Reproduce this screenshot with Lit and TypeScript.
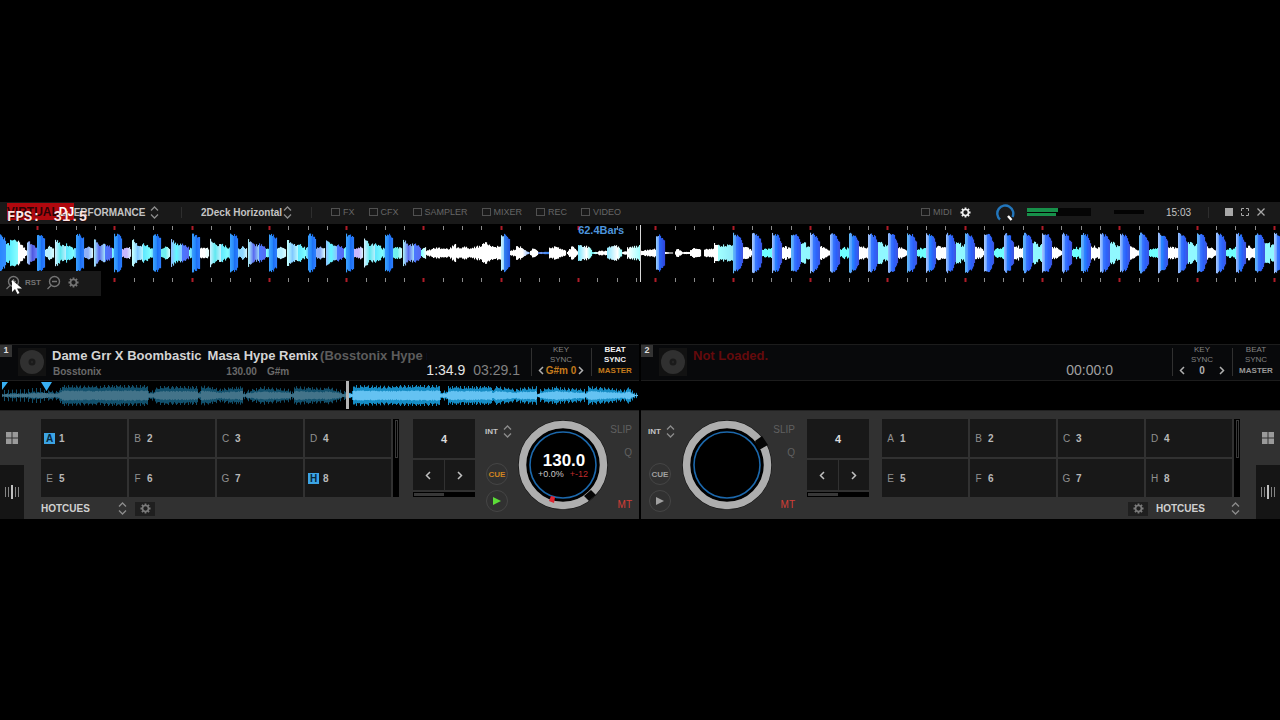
import { LitElement, html, svg, css, nothing } from "lit";
import { customElement, property } from "lit/decorators.js";

type Segment = [number, number, number, number, string, string];

const CENTER = 29;
const TICK_START = 37.9 - 77.32;
const BEAT = 19.33;

const mix = (a: string, b: string, t: number) => {
  const part = (c: string, i: number) => parseInt(c.slice(1 + i * 2, 3 + i * 2), 16);
  return "#" + [0, 1, 2]
    .map((i) => Math.round(part(a, i) + (part(b, i) - part(a, i)) * t).toString(16).padStart(2, "0"))
    .join("");
};

const noise = (n: number) => {
  const v = Math.sin(n * 127.1 + 11.7) * 43758.5453;
  return v - Math.floor(v);
};

const GAP_FILLS = ["#b8f0ff", "#8fb0f8", "#c8b8ff", "#70f0f0", "#ffffff", "#90d8ff"];
const SNARES: [string, string][] = [
  ["#c8f0ff", "#60e8f0"], ["#a8e8f8", "#5a6cf0"], ["#c0ffff", "#80c8ff"], ["#90c0ff", "#60f8ff"],
];

function buildSegments(): Segment[] {
  const out: Segment[] = [];
  out.push([0, 6, 18, 12, "#2a88ff", "#3a90ff"], [6, 10, 9, 8, "#60e8ff", "#60e8ff"],
    [10, 18, 12, 12, "#60f0ff", "#90ffff"], [18, 27, 12, 1, "#ffffff", "#ffffff"],
    [27, 32, 11, 9, "#a8d0ff", "#5058e0"], [32, 37, 8, 5, "#5058e0", "#7088ff"]);
  for (let k = 0; k < 10; k++) {
    const x = 37 + k * BEAT * 2;
    const g = GAP_FILLS[k % GAP_FILLS.length];
    const s = SNARES[k % SNARES.length];
    out.push([x, x + 4, 18, 18, "#3aa0ff", "#2080f8"], [x + 4, x + 8, 18, 14, "#1c70f4", "#3080ff"],
      [x + 8, x + 12, 4, 6, g, g], [x + 12, x + 17, 6, 4, g, "#e0ffff"],
      [x + 18, x + 23, 13, 9, s[0], s[1]], [x + 23, x + 29, 8, 8, s[1], s[0]],
      [x + 29, x + 36, 9, 5, k % 2 ? "#4a78ff" : "#60e8ff", k % 2 ? "#5a68f0" : "#80ffff"],
      [x + 36, x + 39, 4, 6, "#80ffff", "#60c0ff"]);
  }
  const cut = out.filter((s) => s[0] < 421).map((s) => [s[0], Math.min(s[1], 421), s[2], s[3], s[4], s[5]] as Segment);
  const w = "#ffffff";
  cut.push([421, 426, 3, 8, "#80ffff", w], [426, 432, 2, 4, w, w], [432, 450, 5, 4, w, w], [450, 456, 5, 9, w, w],
    [456, 462, 5, 5, w, w], [462, 468, 7, 5, w, w], [468, 480, 4, 7, w, w], [480, 485, 6, 11, w, w],
    [485, 490, 10, 7, w, w], [490, 501, 6, 6, w, w],
    [501, 504, 18, 18, "#c0f0ff", "#90c8ff"], [504, 510, 18, 12, "#3080f0", "#2050e0"], [510, 516, 2, 4, w, w],
    [516, 522, 6, 6, w, w], [522, 530, 4, 0, w, "#80b0ff"], [530, 534, 2, 6, w, w], [534, 538, 5, 1, w, w],
    [538, 549, 1, 1, "#80a0f8", "#3080f0"], [549, 556, 5, 6, w, w], [556, 566, 6, 2, w, w], [567, 572, 1, 7, w, w],
    [572, 578, 6, 1, w, w], [578, 586, 7, 7, "#80e8ff", w], [586, 592, 7, 3, w, "#70ffff"], [592, 598, 1, 1, "#80ffff", w],
    [598, 607, 2, 2, w, w], [607, 617, 5, 8, "#90e8ff", w], [617, 622, 7, 2, w, "#80ffff"], [622, 627, 1, 2, w, w],
    [627, 640, 5, 7, w, "#a0ffff"], [640, 656, 2, 4, w, w],
    [656, 659, 18, 18, "#90c8ff", "#6090ff"], [659, 665, 18, 11, "#2868f8", "#3040d8"], [665, 673, 1, 0, w, w],
    [675, 678, 2, 5, w, w], [678, 682, 4, 1, w, w], [682, 690, 1, 1, w, w], [690, 695, 3, 5, w, w], [695, 701, 4, 4, w, w],
    [704, 714, 4, 4, w, w], [714, 718, 9, 8, w, w], [718, 733, 7, 8, "#a0ffff", "#90e8f8"]);
  const fills: [number, number, string][] = [[6, 1, w], [3, 6, "#70ffff"], [6, 5, w], [10, 8, "#90f8ff"]];
  for (let k = 0; k < 29; k++) {
    const x = 733 + k * BEAT;
    const f = fills[k % 4];
    const edge = k % 3 ? "#a0c4ff" : "#60b8f8";
    cut.push([x, x + 3, 19, 19, edge, "#5090ff"], [x + 3, x + 7, 18, 17, k % 4 === 2 ? "#2888ff" : "#3878ff", "#2858f8"],
      [x + 7, x + 10, 15, 9, "#3060f4", "#4450d8"], [x + 10, x + 15, f[0], (f[0] + f[1]) / 2 + 1, f[2], f[2]],
      [x + 15, x + 20, f[0] / 2 + 2, f[1], f[2], f[2]]);
  }
  return cut;
}

function drawWave() {
  const bars = [];
  for (const [x0, x1, a0, a1, c0, c1] of buildSegments()) {
    for (let x = Math.round(x0); x < Math.round(x1) && x < 1280; x++) {
      const t = (x - x0) / Math.max(1, x1 - x0);
      const base = a0 + (a1 - a0) * t;
      const a = Math.max(0.5, base + (noise(x) - 0.5) * Math.min(3, base * 0.4));
      bars.push(svg`<rect x=${x} y=${CENTER - a} width="1.1" height=${a * 2} fill=${mix(c0, c1, Math.max(0, Math.min(1, t)))} />`);
    }
  }
  const ticks = [];
  for (let i = 0; i < 70; i++) {
    const x = Math.round(TICK_START + i * BEAT) - 0.5;
    if (x < 0) continue;
    const down = i % 4 === 0;
    ticks.push(svg`<path d="M${x} 2v4M${x} 54v4" stroke=${down ? "#b01c28" : "#8a8a8a"} stroke-width=${down ? 2 : 1} />`);
  }
  return html`<svg class="wave" viewBox="0 0 1280 60" preserveAspectRatio="none" aria-label="Beat waveform">
    ${bars}${ticks}<path d="M640.500 1V58" stroke="#d8d8d8" />
  </svg>`;
}

const OVERVIEW: [number, number, number, number][] = [
  [2, 30, 2, 3], [30, 42, 4, 4], [42, 58, 4, 3], [58, 62, 4, 8], [62, 104, 9, 8], [104, 148, 9, 9], [148, 155, 3, 4], [155, 160, 6, 8],
  [160, 198, 8, 8], [198, 201, 3, 3], [201, 222, 9, 5], [222, 243, 6, 8], [243, 247, 2, 3], [247, 265, 4, 8], [265, 291, 7, 5],
  [291, 294, 2, 3], [294, 325, 8, 6], [325, 341, 8, 4], [341, 353, 3, 3], [353, 397, 9, 8], [397, 440, 9, 9], [440, 448, 3, 4],
  [448, 492, 8, 8], [492, 496, 4, 9], [496, 517, 8, 5], [517, 537, 6, 8], [537, 540, 2, 3], [540, 558, 5, 8], [558, 585, 7, 5],
  [585, 588, 3, 7], [588, 612, 8, 6], [612, 626, 6, 4], [626, 631, 7, 6], [631, 638, 4, 0],
];

function drawOverview() {
  let outer = "", inner = "", outerPast = "", innerPast = "";
  for (const [x0, x1, a0, a1] of OVERVIEW) {
    for (let x = x0; x < x1; x++) {
      const base = a0 + ((a1 - a0) * (x - x0)) / (x1 - x0);
      const a = base + (x % 4 === 0 ? 1.5 : noise(x) * 2 - 1.5) + (x < 42 && x % 4 === 0 ? 2 : 0);
      const b = Math.max(0.5, base * 0.5 + noise(x + 900) - 0.3);
      const line = (v: number) => `M${x + 0.5} ${14.5 - v}V${14.5 + v}`;
      if (x < 348) { outerPast += line(a); innerPast += line(b); } else { outer += line(a); inner += line(b); }
    }
  }
  return html`<svg class="ov" viewBox="0 0 639 29" preserveAspectRatio="none" aria-label="Track overview">
    <path d=${outerPast} stroke="#12506c" /><path d=${innerPast} stroke="#437389" />
    <path d=${outer} stroke="#168cc4" /><path d=${inner} stroke="#64c2f2" />
    <path d="M2 1h6l-6 8zM41 1h11l-5.500 9z" fill="#38b0f4" />
    <path d="M347.500 0V28" stroke="#b4b4b4" stroke-width="3" />
  </svg>`;
}

const updown = html`<svg class="ud" viewBox="0 0 9 13" aria-hidden="true"><path d="M1 4.500 4.500 1 8 4.500M1 8.500 4.500 12 8 8.500" fill="none" stroke="currentColor" stroke-width="1.300" /></svg>`;
const gear = html`<svg class="gear" viewBox="0 0 24 24" aria-hidden="true">
  <path fill="none" stroke="currentColor" stroke-width="3.600" d="M12 5.500a6.500 6.500 0 1 0 0 13a6.500 6.500 0 1 0 0-13z" />
  <path stroke="currentColor" stroke-width="4" d="M12 1v4M12 19v4M1 12h4M19 12h4M4.200 4.200 7 7M17 17l2.800 2.800M4.200 19.800 7 17M17 7l2.800-2.800" /></svg>`;
const chevron = (d: string) => html`<svg class="chev" viewBox="0 0 6 9" aria-hidden="true"><path d=${d} fill="none" stroke="currentColor" stroke-width="1.500" /></svg>`;
const LEFT = "M5 1 1.500 4.500 5 8";
const RIGHT = "M1 1 4.500 4.500 1 8";

const shared = css`
  * { box-sizing: border-box; }
  button, select, input { font: inherit; color: inherit; background: none; border: 0; padding: 0; margin: 0; appearance: none; border-radius: 0; }
  button { cursor: pointer; display: flex; align-items: center; justify-content: center; }
  svg { display: block; flex: none; }
  .ud { width: 9px; height: 13px; color: #8c8c8c; }
  .chev { width: 6px; height: 9px; }
  .gear { width: 11px; height: 11px; }
`;

@customElement("dj-toolbar")
class DjToolbar extends LitElement {
  static styles = [shared, css`
    :host { display: flex; align-items: center; box-sizing: border-box; height: 22px; padding-bottom: 2px; background: #191919; color: #c4c4c4; font-size: 10px; position: relative; }
    .brand { position: absolute; left: 7px; top: 1px; width: 67px; height: 17px; background: #b0080e; display: flex; align-items: center; justify-content: center; font: bold 12px "Liberation Sans", sans-serif; color: #2c0406; }
    .brand b { color: #fff; }
    .fps { position: absolute; left: 7px; top: 9px; display: flex; gap: 13px; font: bold 14px/12px "Liberation Mono", monospace; color: #ffe6e6; text-shadow: 0 1px 1px #200; z-index: 2; }
    .pick { display: flex; align-items: center; gap: 4px; font-weight: bold; }
    .layout { margin: 0 22px 0 67px; }
    .bar { width: 1px; height: 11px; background: #2e2e2e; }
    .view { margin: 0 19px; gap: 0; }
    .opts { display: flex; gap: 14px; margin-left: 19px; flex: 1; }
    label { display: flex; align-items: center; gap: 3px; font-size: 9px; color: #666; }
    input { width: 9px; height: 8px; border: 1px solid #505050; }
    .right { display: flex; align-items: center; }
    .right .gear { color: #f0f0f0; }
    .set { margin: 0 25px 0 8px; }
    .knob { width: 19px; height: 19px; }
    .meter { width: 64px; height: 8px; margin: 0 23px 0 12px; background: #050505; display: flex; flex-direction: column; gap: 1px; }
    .meter i { height: 4px; width: 31px; background: #17904a; }
    .meter i + i { height: 3px; width: 29px; }
    .cpu { width: 30px; height: 4px; background: #030303; margin-right: 22px; }
    .clock { width: 42px; }
    .win { display: flex; align-items: center; gap: 8px; margin: 0 15px 0 16px; color: #a8a8a8; }
  `];
  render() {
    return html`
      <div class="brand">VIRTUAL<b>DJ</b></div>
      <div class="fps"><span>FPS:</span><span>31.5</span></div>
      <div class="pick layout"><select aria-label="Layout"><option>PERFORMANCE</option></select>${updown}</div>
      <div class="bar"></div>
      <div class="pick view"><select aria-label="Deck view"><option>2Deck Horizontal</option></select>${updown}</div>
      <div class="bar"></div>
      <div class="opts">${["FX", "CFX", "SAMPLER", "MIXER", "REC", "VIDEO"].map((t) => html`<label><input type="checkbox" />${t}</label>`)}</div>
      <div class="right">
        <label><input type="checkbox" />MIDI</label>
        <button class="set" aria-label="Settings">${gear}</button>
        <svg class="knob" viewBox="0 0 19 19" role="img" aria-label="Master volume"><path d="M4 16.500A8 8 0 1 1 16.500 14" fill="none" stroke="#2276bc" stroke-width="2.400" /><path d="m12 13 3.500 4" stroke="#fff" stroke-width="2.400" /></svg>
        <div class="meter"><i></i><i></i></div>
        <div class="cpu"></div>
        <div class="clock">15:03</div>
        <div class="bar"></div>
        <div class="win">
          <button aria-label="Minimise"><svg width="8" height="8"><path d="M0 0h8v8H0z" fill="currentColor" /></svg></button>
          <button aria-label="Full screen"><svg width="8" height="8"><path d="M.5 3V.5H3M5 .5h2.500V3M7.500 5v2.500H5M3 7.500H.5V5" fill="none" stroke="currentColor" /></svg></button>
          <button aria-label="Close"><svg width="8" height="8"><path d="m.5.5 7 7M7.500.5l-7 7" stroke="currentColor" stroke-width="1.300" /></svg></button>
        </div>
      </div>`;
  }
}

@customElement("dj-deck")
class DjDeck extends LitElement {
  @property({ type: Number }) deck = 1;
  @property({ type: Boolean, reflect: true }) mirrored = false;

  static styles = [shared, css`
    :host { display: block; min-width: 0; background: #313131; color: #b8b8b8; font-size: 10px; }
    .head { display: flex; height: 37px; background: #08090b; border-top: 1px solid #1c1c1c; border-bottom: 1px solid #1c1c1c; }
    .num { width: 12px; height: 12px; background: #333; color: #ddd; font-weight: bold; font-size: 9px; line-height: 11px; text-align: center; }
    .disc { width: 28px; height: 28px; margin: 3px 6px 0 6px; }
    .info { flex: 1; min-width: 0; display: flex; flex-direction: column; }
    .title { width: 375px; overflow: hidden; white-space: pre; font-weight: bold; font-size: 13px; line-height: 21px; color: #d4d4d4; display: flex; gap: 6px; }
    .title .mixname { color: #5c5c5c; margin-left: -4px; }
    .meta { display: flex; align-items: center; font-weight: bold; color: #6a6a6a; line-height: 12px; padding-left: 1px; }
    .bpm { margin-left: 125px; }
    .key { margin-left: 10px; }
    .empty { color: #640a0c; }
    .time { align-self: flex-end; font-size: 14px; line-height: 16px; padding-bottom: 2px; color: #828282; display: flex; gap: 8px; white-space: nowrap; }
    .time b { font-weight: normal; color: #e4e4e4; }
    .idle { margin-right: 48px; color: #a0a0a0; }
    .sync { width: 60px; position: relative; display: flex; flex-direction: column; align-items: center; color: #828282; font-size: 8px; }
    .sync::before { content: ""; position: absolute; left: 0; top: 3px; bottom: 4px; width: 1px; background: #303030; }
    .keysync { margin-left: 11px; }
    .beat { width: 48px; }
    .sync button { line-height: 10px; flex-direction: column; }
    .row { display: flex; align-items: center; justify-content: space-between; width: 46px; font-size: 10px; line-height: 11px; font-weight: bold; color: #b0b0b0; }
    .row.hot { color: #c47a1c; }
    .row button { color: #b0b0b0; }
    .on { color: #f0f0f0; font-weight: bold; }
    .mast { line-height: 11px; white-space: nowrap; color: #989898; font-weight: bold; }
    .mast.hot { color: #c47a1c; }
    .strip { height: 30px; background: #000; border-bottom: 1px solid #222; }
    .ov { width: 100%; height: 29px; }
    .body { display: flex; height: 108px; }
    .side { width: 24px; display: flex; flex-direction: column; }
    .side button { height: 54px; color: #9a9a9a; }
    .side button + button { background: #151515; }
    .padzone { flex: 1; margin: 8px 14px 0 17px; min-width: 0; }
    .padbox { display: flex; gap: 2px; height: 78px; }
    .pads { flex: 1; display: grid; grid-template-columns: repeat(4, 1fr); grid-template-rows: 1fr 1fr; gap: 2px; }
    .pads button { background: #181818; justify-content: flex-start; gap: 4px; padding-left: 3px; font-weight: bold; }
    .pads span { width: 11px; height: 11px; line-height: 11px; text-align: center; color: #909090; font-weight: normal; }
    .pads .lit { background: #3ca4e4; color: #06263c; font-weight: bold; }
    .scroll { width: 6px; background: #000; padding: 1px 1px 0 2px; }
    .scroll i { display: block; height: 38px; border: 1px solid #3a3a3a; }
    .foot { display: flex; align-items: center; height: 22px; padding-top: 1px; font-weight: bold; font-size: 10px; color: #d0d0d0; gap: 8px; }
    .foot .pick { display: flex; align-items: center; justify-content: space-between; width: 86px; }
    .foot .gearbtn { width: 20px; height: 14px; background: #1f1f1f; color: #7a7a7a; }
    .loop { width: 62px; height: 78px; margin-top: 8px; display: grid; grid-template-columns: 1fr 1fr; grid-template-rows: 39px 30px 5px; gap: 2px 1px; }
    .loop button { background: #181818; color: #c0c0c0; }
    .loop .size { grid-column: 1 / 3; font-weight: bold; font-size: 11px; color: #dcdcdc; }
    .loop .track { grid-column: 1 / 3; background: #000; padding: 1px; }
    .loop .track i { display: block; width: 30px; height: 3px; background: #383838; }
    .transport { width: 28px; margin: 13px 5px 0 10px; display: flex; flex-direction: column; align-items: flex-start; }
    .int { display: flex; align-items: center; gap: 3px; font-weight: bold; font-size: 8px; color: #c4c4c4; height: 14px; margin-bottom: 25px; }
    .int select { width: 15px; flex: none; }
    .round { width: 22px; height: 22px; border: 1px solid #454545; border-radius: 50%; font-size: 8px; font-weight: bold; color: #a0a0a0; margin: 0 0 5px 1px; }
    .round.cue { color: #d08420; }
    .round.play { color: #5cdc38; }
    .jog { width: 90px; height: 90px; margin-top: 9px; flex: none; }
    .jog text { font-family: "Liberation Sans", sans-serif; }
    .flags { width: 24px; margin: 11px 7px 0 0; display: flex; flex-direction: column; align-items: flex-end; color: #606060; }
    .flags button { height: 14px; }
    .flags .q { margin-top: 9px; }
    .flags .mt { margin-top: 38px; color: #d43e36; }
    :host([mirrored]) .side { order: 6; }
    :host([mirrored]) .padzone { order: 5; margin: 8px 16px 0 13px; }
    :host([mirrored]) .transport { order: 1; margin-left: 7px; margin-right: 6px; }
    :host([mirrored]) .jog { order: 2; }
    :host([mirrored]) .flags { order: 3; width: 23px; margin-right: 12px; }
    :host([mirrored]) .loop { order: 4; }
    :host([mirrored]) .foot { flex-direction: row-reverse; }
    :host([mirrored]) .foot .pick { width: 84px; }
  `];

  jog(loaded: boolean) {
    return html`<svg class="jog" viewBox="0 0 90 90" role="img" aria-label="Jog wheel">
      <circle cx="45" cy="45" r="37" fill="#000" />
      <circle cx="45" cy="45" r="44.500" fill="none" stroke="#161616" />
      <circle cx="45" cy="45" r="40.500" fill="none" stroke="#aeaeae" stroke-width="7.500" />
      <circle cx="45" cy="45" r="33" fill="none" stroke="#1c68ac" stroke-width="1.600" />
      ${loaded
        ? svg`<path d="m66 76 7-6 5 5-7 6z" fill="#060606" /><path d="m33 76 4 1-1 6-5-2z" fill="#e02430" />
          <text x="46" y="46" text-anchor="middle" font-size="17" font-weight="bold" fill="#fff">130.0</text>
          <text x="20" y="57" font-size="9" fill="#c8c8c8">+0.0%</text><text x="70" y="57" text-anchor="end" font-size="9" fill="#c02c2c">+-12</text>`
        : svg`<path d="m73 21 7-5 6 9-9 5z" fill="#060606" />`}
    </svg>`;
  }

  render() {
    const loaded = this.deck === 1;
    return html`
      <div class="head">
        <div class="num">${this.deck}</div>
        <svg class="disc" viewBox="0 0 28 28" aria-hidden="true"><path d="M0 0h28v28H0z" fill="#121212" /><circle cx="14" cy="14" r="12" fill="#303030" /><circle cx="14" cy="14" r="3.500" fill="#1a1a1a" /><circle cx="14" cy="14" r="1.200" fill="#262626" /></svg>
        <div class="info">
          ${loaded
            ? html`<div class="title"><span>Dame Grr X Boombastic</span><span>Masa Hype Remix</span><span class="mixname">(Bosstonix Hype remix)</span></div>
              <div class="meta"><span>Bosstonix</span><span class="bpm">130.00</span><span class="key">G#m</span></div>`
            : html`<div class="title empty">Not Loaded.</div>`}
        </div>
        <div class="time">${loaded ? html`<b>1:34.9</b><span>03:29.1</span>` : html`<span class="idle">00:00:0</span>`}</div>
        <div class="sync keysync">
          <button><span>KEY</span><span>SYNC</span></button>
          <div class="row ${loaded ? "hot" : ""}"><button aria-label="Key down">${chevron(LEFT)}</button>${loaded ? "G#m 0" : "0"}<button aria-label="Key up">${chevron(RIGHT)}</button></div>
        </div>
        <div class="sync beat">
          <button class=${loaded ? "on" : ""}><span>BEAT</span><span>SYNC</span></button>
          <div class="mast ${loaded ? "hot" : ""}">MASTER</div>
        </div>
      </div>
      <div class="strip">${loaded ? drawOverview() : nothing}</div>
      <div class="body">
        <div class="side">
          <button aria-label="Pads"><svg width="12" height="12"><path d="M0 0h5.500v5.500H0zM6.500 0H12v5.500H6.500zM0 6.500h5.500V12H0zM6.500 6.500H12V12H6.500z" fill="currentColor" /></svg></button>
          <button aria-label="Waveform"><svg width="14" height="14"><path d="M.5 2v10M3.500 2v10M10.500 2v10M13.500 2v10" stroke="#858585" /><path d="M7 0v14" stroke="#c0c0c0" stroke-width="2" /></svg></button>
        </div>
        <div class="padzone">
          <div class="padbox">
            <div class="pads">${["A", "B", "C", "D", "E", "F", "G", "H"].map((l, i) => html`<button><span class=${loaded && (i === 0 || i === 7) ? "lit" : ""}>${l}</span>${i + 1}</button>`)}</div>
            <div class="scroll"><i></i></div>
          </div>
          <div class="foot">
            <div class="pick"><select aria-label="Pad page"><option>HOTCUES</option></select>${updown}</div>
            <button class="gearbtn" aria-label="Pad settings">${gear}</button>
          </div>
        </div>
        <div class="loop">
          <button class="size">4</button>
          <button aria-label="Halve loop">${chevron(LEFT)}</button><button aria-label="Double loop">${chevron(RIGHT)}</button>
          <div class="track"><i></i></div>
        </div>
        <div class="transport">
          <div class="int"><select aria-label="Sync source"><option>INT</option></select>${updown}</div>
          <button class="round ${loaded ? "cue" : ""}">CUE</button>
          <button class="round ${loaded ? "play" : ""}" aria-label="Play"><svg width="8" height="8"><path d="M0 0 8 4 0 8z" fill="currentColor" /></svg></button>
        </div>
        ${this.jog(loaded)}
        <div class="flags"><button>SLIP</button><button class="q">Q</button><button class="mt">MT</button></div>
      </div>`;
  }
}

@customElement("app-root")
class AppRoot extends LitElement {
  static styles = [shared, css`
    :host { display: flex; flex-direction: column; justify-content: center; min-height: 100vh; padding-top: 1px; box-sizing: border-box; background: #000; font-family: "Liberation Sans", Arial, sans-serif; overflow: hidden; }
    .rhythm { position: relative; height: 120px; }
    .wave { width: 100%; height: 60px; }
    .bars { position: absolute; right: 51.250%; top: 0; font-weight: bold; font-size: 11px; line-height: 13px; color: #4c94dc; }
    .zoom { position: absolute; left: 0; top: 47px; width: 101px; height: 25px; padding: 0 0 2px 5px; background: #191919; color: #747474; display: flex; align-items: center; gap: 5px; font-weight: bold; font-size: 8px; }
    .zoom .gear { margin-left: 2px; }
    .cursor { position: absolute; left: 12px; top: 56px; width: 10px; height: 15px; }
    .decks { display: grid; grid-template-columns: 1fr 1fr; gap: 2px; }
  `];
  render() {
    const lens = (d: string) => html`<svg width="15" height="15" viewBox="0 0 15 15"><circle cx="8.500" cy="6.500" r="5" fill="none" stroke="currentColor" stroke-width="1.400" /><path d=${d} stroke="currentColor" stroke-width="1.300" fill="none" /></svg>`;
    return html`
      <dj-toolbar></dj-toolbar>
      <div class="rhythm">
        ${drawWave()}
        <div class="bars">62.4Bars</div>
        <div class="zoom">
          <button aria-label="Zoom in">${lens("M6 6.500h5M8.500 4v5M5 10.500 1.500 14")}</button>
          <button>RST</button>
          <button aria-label="Zoom out">${lens("M6 6.500h5M5 10.500 1.500 14")}</button>
          <button aria-label="Waveform settings">${gear}</button>
        </div>
        <svg class="cursor" viewBox="0 0 10 15" aria-hidden="true"><path d="M0 0v12l3-3 2.500 5 2-1-2.500-4.500H10z" fill="#fff" /></svg>
      </div>
      <div class="decks"><dj-deck .deck=${1}></dj-deck><dj-deck .deck=${2} mirrored></dj-deck></div>`;
  }
}
